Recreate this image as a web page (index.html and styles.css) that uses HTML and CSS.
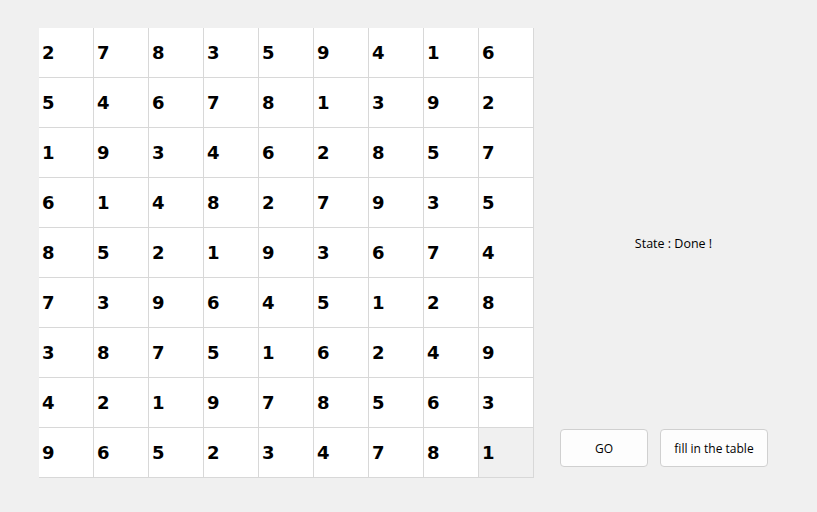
FILE: index.html
```html
<!DOCTYPE html>
<html>
<head>
<meta charset="utf-8">
<link rel="stylesheet" href="styles.css">
</head>
<body>
<div class="window">
  <div class="board">
    <div class="cell">2</div><div class="cell">7</div><div class="cell">8</div><div class="cell">3</div><div class="cell">5</div><div class="cell">9</div><div class="cell">4</div><div class="cell">1</div><div class="cell">6</div>
    <div class="cell">5</div><div class="cell">4</div><div class="cell">6</div><div class="cell">7</div><div class="cell">8</div><div class="cell">1</div><div class="cell">3</div><div class="cell">9</div><div class="cell">2</div>
    <div class="cell">1</div><div class="cell">9</div><div class="cell">3</div><div class="cell">4</div><div class="cell">6</div><div class="cell">2</div><div class="cell">8</div><div class="cell">5</div><div class="cell">7</div>
    <div class="cell">6</div><div class="cell">1</div><div class="cell">4</div><div class="cell">8</div><div class="cell">2</div><div class="cell">7</div><div class="cell">9</div><div class="cell">3</div><div class="cell">5</div>
    <div class="cell">8</div><div class="cell">5</div><div class="cell">2</div><div class="cell">1</div><div class="cell">9</div><div class="cell">3</div><div class="cell">6</div><div class="cell">7</div><div class="cell">4</div>
    <div class="cell">7</div><div class="cell">3</div><div class="cell">9</div><div class="cell">6</div><div class="cell">4</div><div class="cell">5</div><div class="cell">1</div><div class="cell">2</div><div class="cell">8</div>
    <div class="cell">3</div><div class="cell">8</div><div class="cell">7</div><div class="cell">5</div><div class="cell">1</div><div class="cell">6</div><div class="cell">2</div><div class="cell">4</div><div class="cell">9</div>
    <div class="cell">4</div><div class="cell">2</div><div class="cell">1</div><div class="cell">9</div><div class="cell">7</div><div class="cell">8</div><div class="cell">5</div><div class="cell">6</div><div class="cell">3</div>
    <div class="cell">9</div><div class="cell">6</div><div class="cell">5</div><div class="cell">2</div><div class="cell">3</div><div class="cell">4</div><div class="cell">7</div><div class="cell">8</div><div class="cell current">1</div>
  </div>
  <div class="panel">
    <div class="state">State : Done !</div>
    <div class="buttons">
      <button class="btn btn-go">GO</button>
      <button class="btn btn-fill">fill in the table</button>
    </div>
  </div>
</div>
</body>
</html>
```

FILE: styles.css
```css
html, body {
  margin: 0;
  padding: 0;
  background: #f0f0f0;
  width: 817px;
  height: 512px;
  overflow: hidden;
}

.window {
  display: flex;
  padding: 28px 0 0 39px;
}

.board {
  display: grid;
  grid-template-columns: repeat(9, 55px);
  grid-template-rows: repeat(9, 50px);
  width: 495px;
}

.cell {
  box-sizing: border-box;
  background: #ffffff;
  border-right: 1px solid #d8d8d8;
  border-bottom: 1px solid #d8d8d8;
  font-family: "DejaVu Sans", sans-serif;
  font-weight: bold;
  font-size: 18px;
  color: #000;
  display: flex;
  align-items: center;
  padding-left: 3px;
}

.cell.current {
  background: #f0f0f0;
}

.panel {
  display: flex;
  flex-direction: column;
  width: 283px;
  height: 449px;
}

.state {
  margin-top: 208px;
  padding-right: 4px;
  text-align: center;
  font-family: "Open Sans", sans-serif;
  font-size: 12.5px;
  line-height: 16px;
  color: #000;
}

.buttons {
  margin-top: auto;
  margin-bottom: 10px;
  display: flex;
  gap: 12px;
  padding-left: 26px;
}

.btn {
  box-sizing: border-box;
  height: 38px;
  background: #fdfdfd;
  border: 1px solid #d0d0d0;
  border-radius: 4px;
  font-family: "Open Sans", sans-serif;
  font-size: 12px;
  color: #000;
  padding: 0;
}

.btn-go {
  width: 88px;
}

.btn-fill {
  width: 108px;
}
```
